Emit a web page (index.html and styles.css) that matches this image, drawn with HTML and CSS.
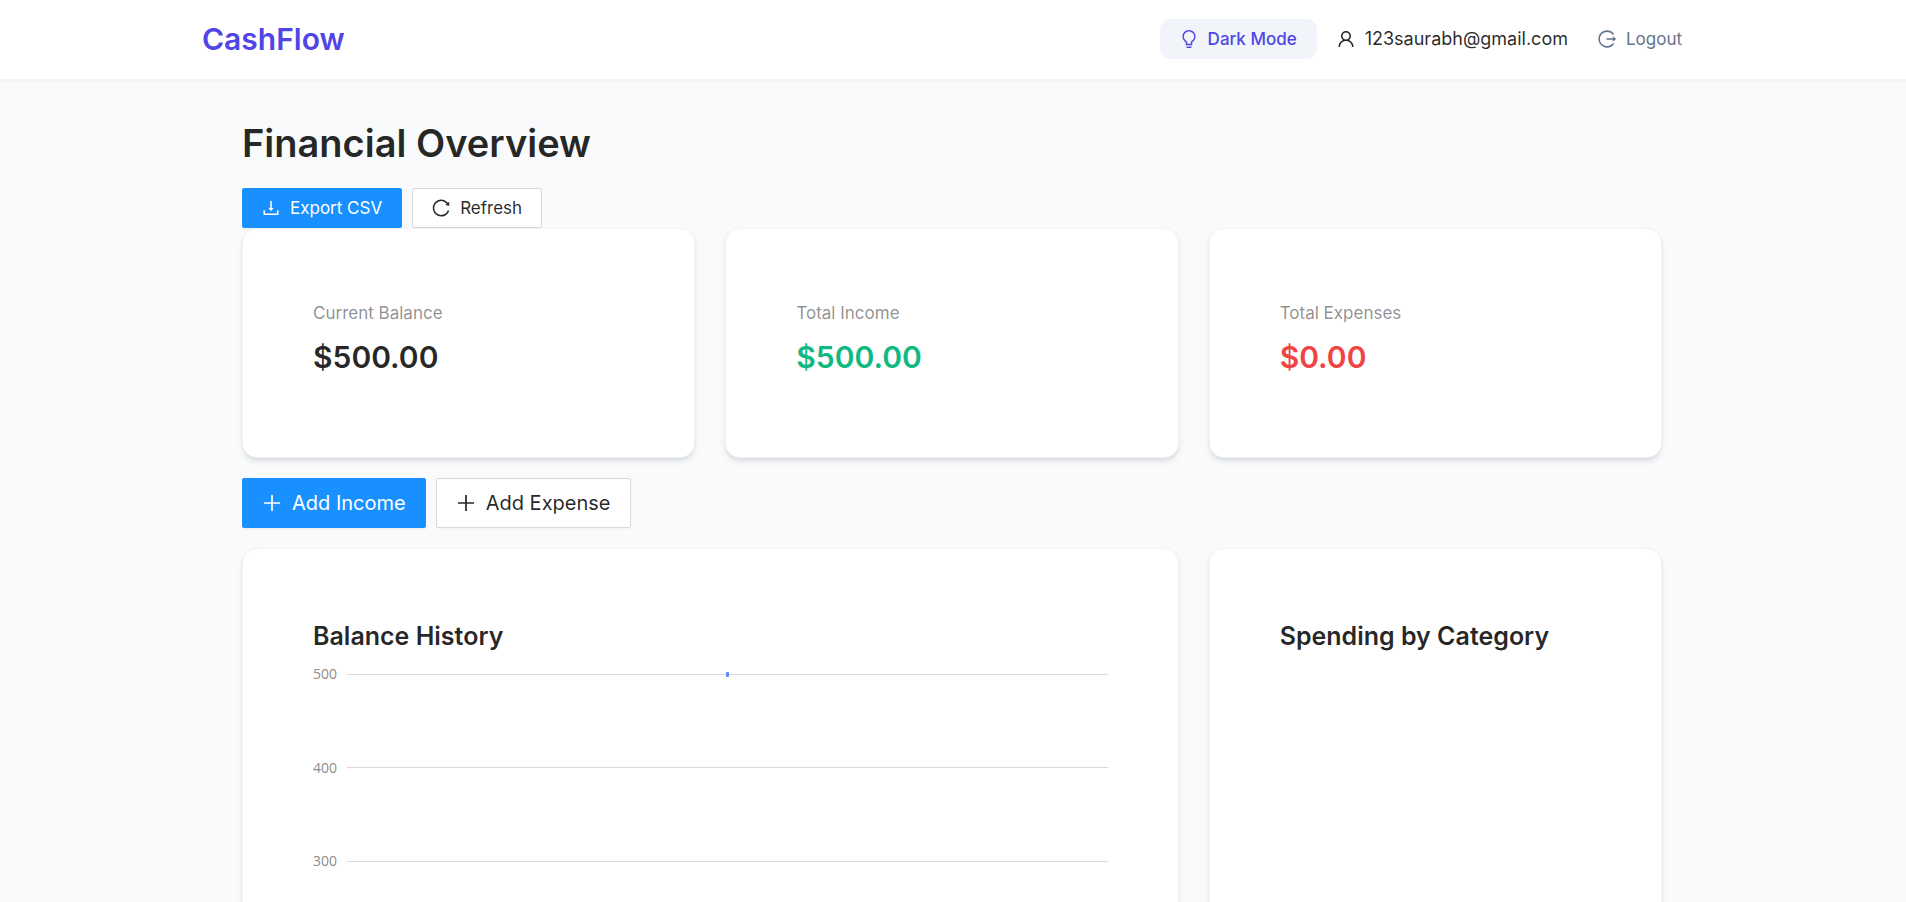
FILE: index.html
```html
<!DOCTYPE html>
<html lang="en">
<head>
<meta charset="utf-8">
<meta name="viewport" content="width=device-width, initial-scale=1">
<title>CashFlow</title>
<link rel="stylesheet" href="styles.css">
</head>
<body>
<header class="header">
  <div class="header-inner">
    <div class="logo">CashFlow</div>
    <div class="header-actions">
      <button type="button" class="btn btn-theme">
        <svg class="icon" viewBox="64 64 896 896" aria-hidden="true"><path d="M632 888H392c-4.4 0-8 3.6-8 8v32c0 17.7 14.3 32 32 32h192c17.7 0 32-14.3 32-32v-32c0-4.4-3.6-8-8-8zM512 64c-181.1 0-328 146.9-328 328 0 121.4 66 227.4 164 284.1V792c0 17.7 14.3 32 32 32h264c17.7 0 32-14.3 32-32V676.1c98-56.7 164-162.7 164-284.1 0-181.1-146.9-328-328-328zm127.9 549.8L604 634.6V752H420V634.6l-35.9-20.8C305.4 568.3 256 484.5 256 392c0-141.4 114.6-256 256-256s256 114.6 256 256c0 92.5-49.4 176.3-128.1 221.8z"/></svg>
        <span>Dark Mode</span>
      </button>
      <div class="user">
        <svg class="icon" viewBox="64 64 896 896" aria-hidden="true"><path d="M858.5 763.6a374 374 0 00-80.6-119.5 375.63 375.63 0 00-119.5-80.6c-.4-.2-.8-.3-1.2-.5C719.5 518 760 444.7 760 362c0-137-111-248-248-248S264 225 264 362c0 82.7 40.5 156 102.8 201.1-.4.2-.8.3-1.2.5-44.8 18.9-85 46-119.5 80.6a375.63 375.63 0 00-80.6 119.5A371.7 371.7 0 00136 901.8a8 8 0 008 8.2h60c4.4 0 7.9-3.5 8-7.8 2-77.2 33-149.5 87.8-204.3 56.7-56.7 132-87.9 212.2-87.9s155.5 31.2 212.2 87.9C779 752.7 810 825 812 902.2c.1 4.4 3.6 7.8 8 7.8h60a8 8 0 008-8.2c-1-47.8-10.9-94.3-29.5-138.2zM512 534c-45.9 0-89.1-17.9-121.6-50.4S340 407.9 340 362c0-45.9 17.9-89.1 50.4-121.6S466.1 190 512 190s89.1 17.9 121.6 50.4S684 316.1 684 362c0 45.9-17.9 89.1-50.4 121.6S557.9 534 512 534z"/></svg>
        <span>123saurabh@gmail.com</span>
      </div>
      <button type="button" class="btn btn-text">
        <svg class="icon" viewBox="64 64 896 896" aria-hidden="true"><path d="M868 732h-70.3c-4.8 0-9.3 2.1-12.3 5.8-7 8.5-14.5 16.7-22.4 24.5a353.84 353.84 0 01-112.7 75.9A352.8 352.8 0 01512.4 866c-47.9 0-94.3-9.4-137.9-27.8a353.84 353.84 0 01-112.7-75.9 353.28 353.28 0 01-76-112.5C167.3 606.2 158 559.9 158 512s9.4-94.2 27.8-137.8c17.8-42.1 43.4-80 76-112.5s70.5-58.1 112.7-75.9c43.6-18.4 90-27.8 137.9-27.8 47.9 0 94.3 9.3 137.9 27.8 42.2 17.8 80.1 43.4 112.7 75.9 7.9 7.9 15.3 16.1 22.4 24.5 3 3.7 7.6 5.8 12.3 5.8H868c6.3 0 10.2-7 6.7-12.3C798 160.5 663.8 81.6 511.3 82 271.7 82.6 79.6 277.1 82 516.4 84.4 751.9 276.2 942 512.4 942c152.1 0 285.7-78.8 362.3-197.7 3.4-5.3-.4-12.3-6.7-12.3zm88.9-226.3L815 393.7c-5.3-4.2-13-.4-13 6.3v76H488c-4.4 0-8 3.6-8 8v56c0 4.4 3.6 8 8 8h314v76c0 6.7 7.8 10.5 13 6.3l141.9-112a8 8 0 000-12.6z"/></svg>
        <span>Logout</span>
      </button>
    </div>
  </div>
</header>

<main class="main">
  <h1 class="page-title">Financial Overview</h1>
  <div class="toolbar">
    <button type="button" class="btn btn-primary">
      <svg class="icon" viewBox="64 64 896 896" aria-hidden="true"><path d="M505.7 661a8 8 0 0012.6 0l112-141.7c4.1-5.2.4-12.9-6.3-12.9h-74.1V168c0-4.4-3.6-8-8-8h-60c-4.4 0-8 3.6-8 8v338.3H400c-6.7 0-10.4 7.7-6.3 12.9l112 141.8zM878 626h-60c-4.4 0-8 3.6-8 8v154H214V634c0-4.4-3.6-8-8-8h-60c-4.4 0-8 3.6-8 8v198c0 17.7 14.3 32 32 32h684c17.7 0 32-14.3 32-32V634c0-4.4-3.6-8-8-8z"/></svg>
      <span>Export CSV</span>
    </button>
    <button type="button" class="btn btn-default">
      <svg class="icon" viewBox="64 64 896 896" aria-hidden="true"><path d="M909.1 209.3l-56.4 44.1C775.8 155.1 656.2 92 521.9 92 290 92 102.3 279.5 102 511.5 101.7 743.7 289.8 932 521.9 932c181.3 0 335.8-115 394.6-276.1 1.5-4.2-.7-8.9-4.9-10.3l-56.7-19.5a8 8 0 00-10.1 4.8c-1.8 5-3.8 10-5.9 14.9-17.3 41-42.1 77.8-73.7 109.4A344.77 344.77 0 01655.9 829c-42.3 17.9-87.4 27-133.8 27-46.5 0-91.5-9.1-133.8-27A341.5 341.5 0 01279 755.2a342.16 342.16 0 01-73.7-109.4c-17.9-42.4-27-87.4-27-133.9s9.1-91.5 27-133.9c17.3-41 42.1-77.8 73.7-109.4 31.6-31.6 68.4-56.4 109.3-73.8 42.3-17.9 87.4-27 133.8-27 46.5 0 91.5 9.1 133.8 27a341.5 341.5 0 01109.3 73.8c9.9 9.9 19.2 20.4 27.8 31.4l-60.2 47a8 8 0 003 14.1l175.6 43c5 1.2 9.9-2.6 9.9-7.7l.8-180.9c-.1-6.6-7.8-10.3-13-6.2z"/></svg>
      <span>Refresh</span>
    </button>
  </div>

  <section class="grid" aria-label="Summary">
    <div class="card">
      <div class="stat-label">Current Balance</div>
      <div class="stat-value">$500.00</div>
    </div>
    <div class="card">
      <div class="stat-label">Total Income</div>
      <div class="stat-value stat-income">$500.00</div>
    </div>
    <div class="card">
      <div class="stat-label">Total Expenses</div>
      <div class="stat-value stat-expense">$0.00</div>
    </div>
  </section>

  <div class="toolbar toolbar-spaced">
    <button type="button" class="btn btn-large btn-primary">
      <svg class="icon" viewBox="64 64 896 896" aria-hidden="true"><path d="M474 152h76v720h-76zM152 474h720v76H152z"/></svg>
      <span>Add Income</span>
    </button>
    <button type="button" class="btn btn-large btn-default">
      <svg class="icon" viewBox="64 64 896 896" aria-hidden="true"><path d="M474 152h76v720h-76zM152 474h720v76H152z"/></svg>
      <span>Add Expense</span>
    </button>
  </div>

  <section class="grid" aria-label="Charts">
    <div class="card card-wide">
      <h2 class="card-title">Balance History</h2>
      <div class="chart">
        <div class="tick"><span class="tick-label">500</span><span class="tick-line"><i class="point"></i></span></div>
        <div class="tick"><span class="tick-label">400</span><span class="tick-line"></span></div>
        <div class="tick"><span class="tick-label">300</span><span class="tick-line"></span></div>
      </div>
    </div>
    <div class="card">
      <h2 class="card-title">Spending by Category</h2>
    </div>
  </section>
</main>
</body>
</html>
```
FILE: styles.css
```css
* {
  box-sizing: border-box;
}

body {
  margin: 0;
  background: #f8fafc;
  color: rgba(0, 0, 0, 0.85);
  font-family: Inter, "Liberation Sans", sans-serif;
  font-size: 18px;
  line-height: 28px;
}

.header {
  background: #fff;
  border-bottom: 1px solid #f1f5f9;
  box-shadow: 0 1px 3px rgba(0, 0, 0, 0.05);
}

.header-inner {
  display: flex;
  align-items: center;
  justify-content: space-between;
  max-width: 1502px;
  margin: 0 auto;
  padding: 17px 2px 18px 0;
}

.logo {
  color: #4f46e5;
  font-size: 30px;
  font-weight: 600;
  line-height: 44px;
}

.header-actions {
  display: flex;
  align-items: center;
}

.user {
  display: flex;
  align-items: center;
  gap: 10px;
  margin: 0 10px 0 20px;
}

.icon {
  flex: none;
  width: 18px;
  height: 18px;
  fill: currentColor;
}

.btn {
  display: inline-flex;
  align-items: center;
  gap: 10px;
  height: 40px;
  padding: 0 19px;
  border: 1px solid transparent;
  border-radius: 2px;
  background: transparent;
  color: inherit;
  font: inherit;
  font-size: 17px;
  white-space: nowrap;
  cursor: pointer;
}

.btn-primary {
  border-color: #1890ff;
  background: #1890ff;
  color: #fff;
  box-shadow: 0 2px 0 rgba(0, 0, 0, 0.04);
}

.btn-default {
  border-color: #d9d9d9;
  background: #fff;
  box-shadow: 0 2px 0 rgba(0, 0, 0, 0.02);
}

.btn-large {
  height: 50px;
  font-size: 20px;
}

.btn-large .icon {
  width: 20px;
  height: 20px;
}

.btn-theme {
  border-radius: 10px;
  background: #f1f5f9;
  color: #4f46e5;
  font-weight: 500;
}

.btn-text {
  color: #64748b;
}

.main {
  max-width: 1502px;
  margin: 0 auto;
  padding: 40px 42px 40px 40px;
}

.page-title {
  margin: 0 0 22px;
  font-size: 38px;
  font-weight: 600;
  line-height: 46px;
}

.toolbar {
  display: flex;
  gap: 10px;
}

.toolbar-spaced {
  margin: 20px 0;
}

.grid {
  display: grid;
  grid-template-columns: repeat(3, minmax(0, 1fr));
  gap: 30px;
}

.card {
  position: relative;
  padding: 70px;
  border: 1px solid #f1f5f9;
  border-radius: 15px;
  background: #fff;
  box-shadow: 0 4px 6px -1px rgba(0, 0, 0, 0.1), 0 2px 4px -1px rgba(0, 0, 0, 0.06);
}

.card-wide {
  grid-column: span 2;
}

.stat-label {
  margin-bottom: 6px;
  color: rgba(0, 0, 0, 0.45);
  font-size: 17px;
}

.stat-value {
  margin-bottom: 6px;
  font-size: 30px;
  font-weight: 600;
  line-height: 48px;
}

.stat-income {
  color: #10b981;
}

.stat-expense {
  color: #ef4444;
}

.card-title {
  margin: 0;
  font-size: 25px;
  font-weight: 600;
  line-height: 35px;
}

.chart {
  display: flex;
  flex-direction: column;
  justify-content: space-between;
  height: 207px;
  margin-top: 10px;
}

.tick {
  display: flex;
  align-items: center;
  gap: 10px;
  height: 20px;
}

.tick-label {
  width: 24px;
  color: #8c8c8c;
  font-family: "Open Sans", "Noto Sans", sans-serif;
  font-size: 14px;
  line-height: 20px;
  text-align: right;
}

.tick-line {
  display: flex;
  flex: 1;
  align-items: center;
  justify-content: center;
  height: 1px;
  background: #d9d9d9;
}

.point {
  flex: none;
  width: 3px;
  height: 5px;
  border-radius: 1px;
  background: #5b8ff9;
}
```
